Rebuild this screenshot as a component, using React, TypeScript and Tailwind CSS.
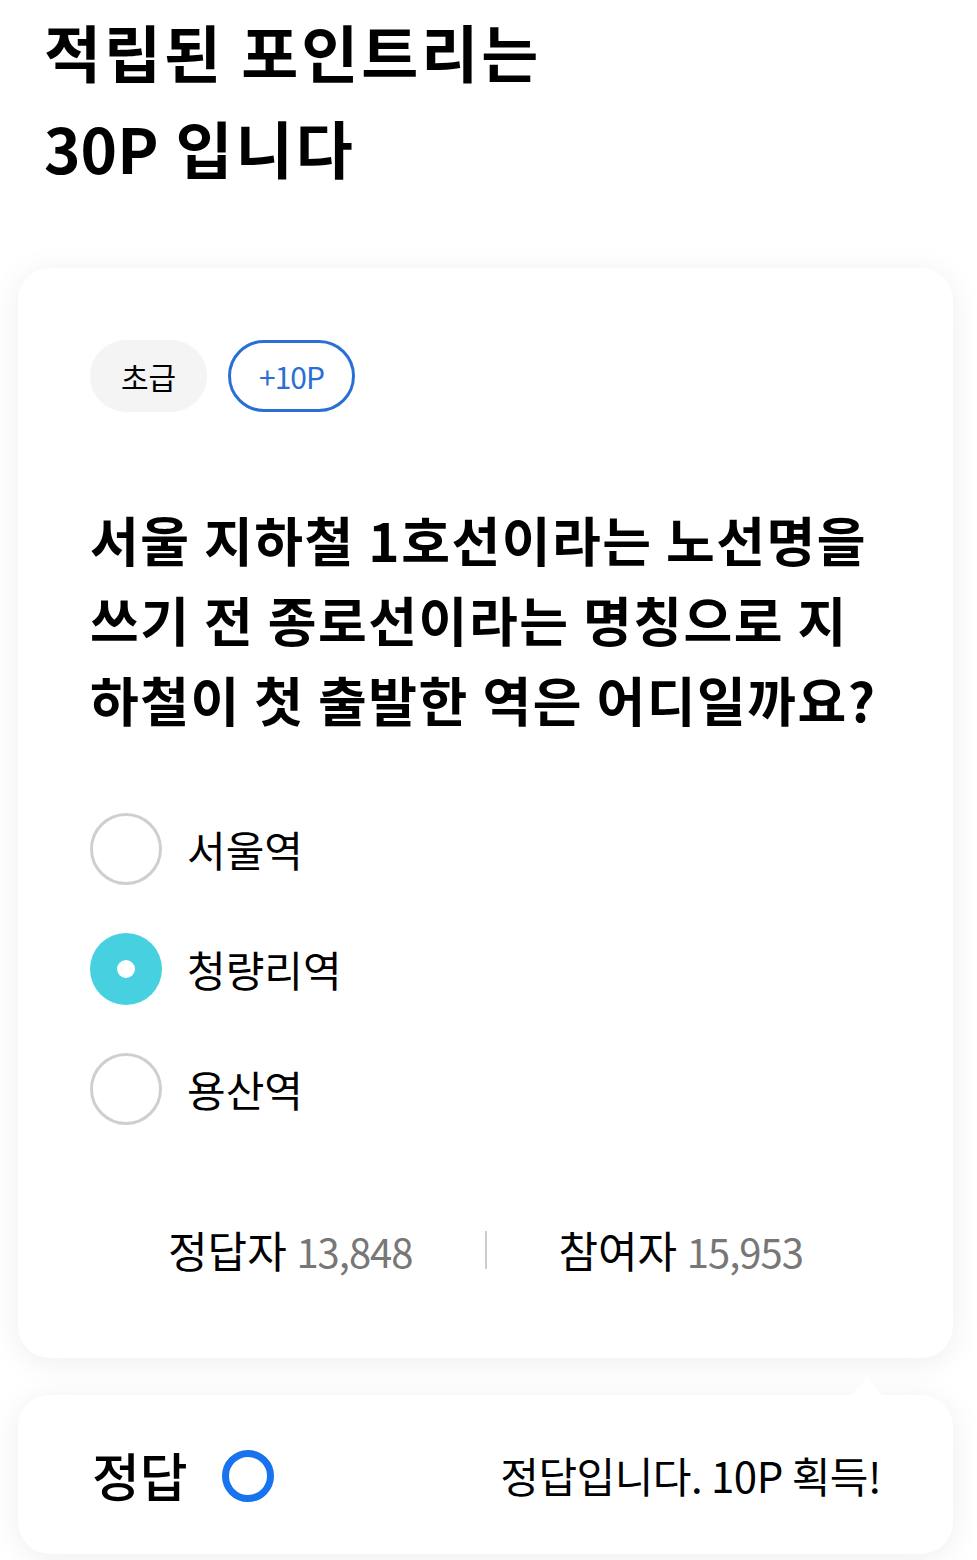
import React from 'react';

const options = [
  { label: '서울역', selected: false },
  { label: '청량리역', selected: true },
  { label: '용산역', selected: false },
];

const App: React.FC = () => {
  return (
    <div
      className="w-[977px] min-h-[1560px] bg-white text-black"
      style={{ fontFamily: '"Noto Sans CJK KR", "Noto Sans", sans-serif' }}
    >
      {/* Title */}
      <h1 className="pl-[44px] pt-[3px] text-[62px] leading-[96px] font-bold tracking-[3px]">
        적립된 포인트리는
        <br />
        <span className="tracking-[0px]">30P</span> 입니다
      </h1>

      <div className="pl-[18px] pr-[24px] pt-[73px] pb-[7px]">
        {/* Quiz card */}
        <div className="rounded-[32px] bg-white shadow-[0_4px_32px_rgba(0,0,0,0.07)] px-[72px] pt-[72px] pb-[84px]">
          <div className="flex items-center gap-[21px]">
            <span className="flex h-[72px] w-[117px] items-center justify-center rounded-full bg-[#f4f4f4] text-[30px]">
              초급
            </span>
            <span className="flex h-[72px] w-[127px] items-center justify-center rounded-full border-[3px] border-[#2a6fd3] text-[30px] text-[#2a6fd3] tracking-[-1px]">
              +10P
            </span>
          </div>

          <p className="mt-[87px] text-[53px] leading-[80px] font-bold tracking-[1.5px] whitespace-nowrap">
            서울 지하철 1호선이라는 노선명을
            <br />
            쓰기 전 종로선이라는 명칭으로 지
            <br />
            하철이 첫 출발한 역은 어디일까요?
          </p>

          <ul className="mt-[74px] flex flex-col gap-[48px]">
            {options.map((opt) => (
              <li key={opt.label} className="flex items-center gap-[25px]">
                {opt.selected ? (
                  <span className="flex h-[72px] w-[72px] items-center justify-center rounded-full bg-[#46d0e0]">
                    <span className="h-[18px] w-[18px] rounded-full bg-white" />
                  </span>
                ) : (
                  <span className="h-[72px] w-[72px] rounded-full border-[3px] border-[#cfcfcf]" />
                )}
                <span className="text-[42px] leading-[48px]">{opt.label}</span>
              </li>
            ))}
          </ul>

          <div className="mt-[101px] flex h-[48px] items-center justify-center text-[43px] leading-[48px]">
            <span>
              정답자 <span className="text-[40px] text-[#777777] tracking-[-1px]">13,848</span>
            </span>
            <span className="mx-[72px] h-[38px] w-[2px] bg-[#cccccc]" />
            <span>
              참여자 <span className="text-[40px] text-[#777777] tracking-[-1px]">15,953</span>
            </span>
          </div>
        </div>

        {/* Result card */}
        <div className="relative mt-[37px] flex h-[159px] items-center justify-between rounded-[32px] bg-white shadow-[0_4px_32px_rgba(0,0,0,0.07)] pl-[74px] pr-[72px]">
          <svg
            className="absolute right-[70px] top-[-18px]"
            width="32"
            height="19"
            viewBox="0 0 32 19"
          >
            <polygon points="16,0 32,19 0,19" fill="#ffffff" />
          </svg>
          <div className="flex items-center gap-[34px]">
            <span className="text-[52px] font-medium">정답</span>
            <span className="mt-[3px] h-[52px] w-[52px] rounded-full border-[7px] border-[#1a73ee]" />
          </div>
          <span className="text-[42px] tracking-[-0.5px]">정답입니다. 10P 획득!</span>
        </div>
      </div>
    </div>
  );
};

export default App;
